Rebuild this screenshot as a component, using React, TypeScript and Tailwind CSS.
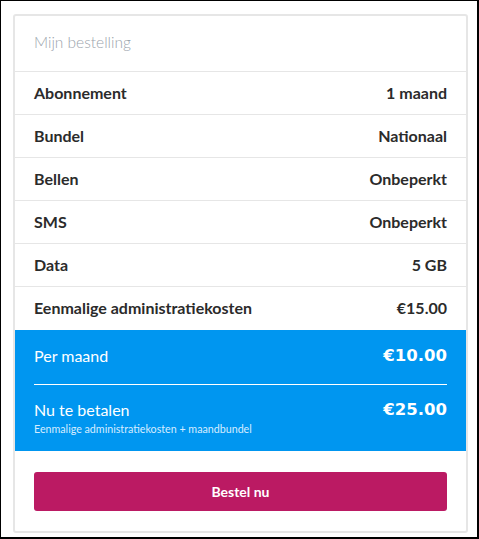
import React from 'react';

const rows = [
  { label: 'Abonnement', value: '1 maand' },
  { label: 'Bundel', value: 'Nationaal' },
  { label: 'Bellen', value: 'Onbeperkt' },
  { label: 'SMS', value: 'Onbeperkt' },
  { label: 'Data', value: '5 GB' },
  { label: 'Eenmalige administratiekosten', value: '€15.00' },
];

const priceFont = { fontFamily: '"DejaVu Sans", sans-serif' };

export default function App() {
  return (
    <div
      className="w-[479px] h-[539px] bg-white border-t border-l border-r-2 border-b-2 border-black pl-[12px] pt-[13px]"
      style={{ fontFamily: 'Lato, "Open Sans", sans-serif' }}
    >
      <div className="w-[455px] h-[519px] border-2 border-[#e6e6e6] rounded-[3px] bg-white flex flex-col">
        {/* header */}
        <div className="h-[56px] border-b border-[#e6e6e6] px-[19px] flex items-center">
          <span className="text-[15.5px] font-light text-[#9ba4ac] -mt-[2px]">Mijn bestelling</span>
        </div>

        {/* rows */}
        {rows.map((r, i) => (
          <div
            key={r.label}
            className={`h-[43px] px-[19px] flex items-center justify-between text-[16px] font-bold text-[#2b2b2b] ${
              i < rows.length - 1 ? 'border-b border-[#e6e6e6]' : ''
            }`}
          >
            <span className="-mt-[1px]">{r.label}</span>
            <span className="-mt-[1px]">{r.value}</span>
          </div>
        ))}

        {/* totals */}
        <div className="bg-[#0096f0] text-white px-[19px]">
          <div className="h-[55px] flex items-center justify-between border-b border-white">
            <span className="text-[16px] -mt-[2px]">Per maand</span>
            <span className="text-[16.5px] font-bold -mt-[2px]" style={priceFont}>€10.00</span>
          </div>
          <div className="h-[66px] flex justify-between pt-[15px]">
            <div className="flex flex-col">
              <span className="text-[16px] leading-[20px]">Nu te betalen</span>
              <span className="text-[10.7px] leading-[14px] mt-[2px] text-[#d6ecff]">
                Eenmalige administratiekosten + maandbundel
              </span>
            </div>
            <span className="text-[16.5px] font-bold leading-[20px]" style={priceFont}>€25.00</span>
          </div>
        </div>

        {/* button */}
        <div className="px-[19px] pt-[21px]">
          <button className="w-full h-[39px] rounded-[3px] bg-[#bb1a63] text-white text-[14px] font-bold">
            Bestel nu
          </button>
        </div>
      </div>
    </div>
  );
}
